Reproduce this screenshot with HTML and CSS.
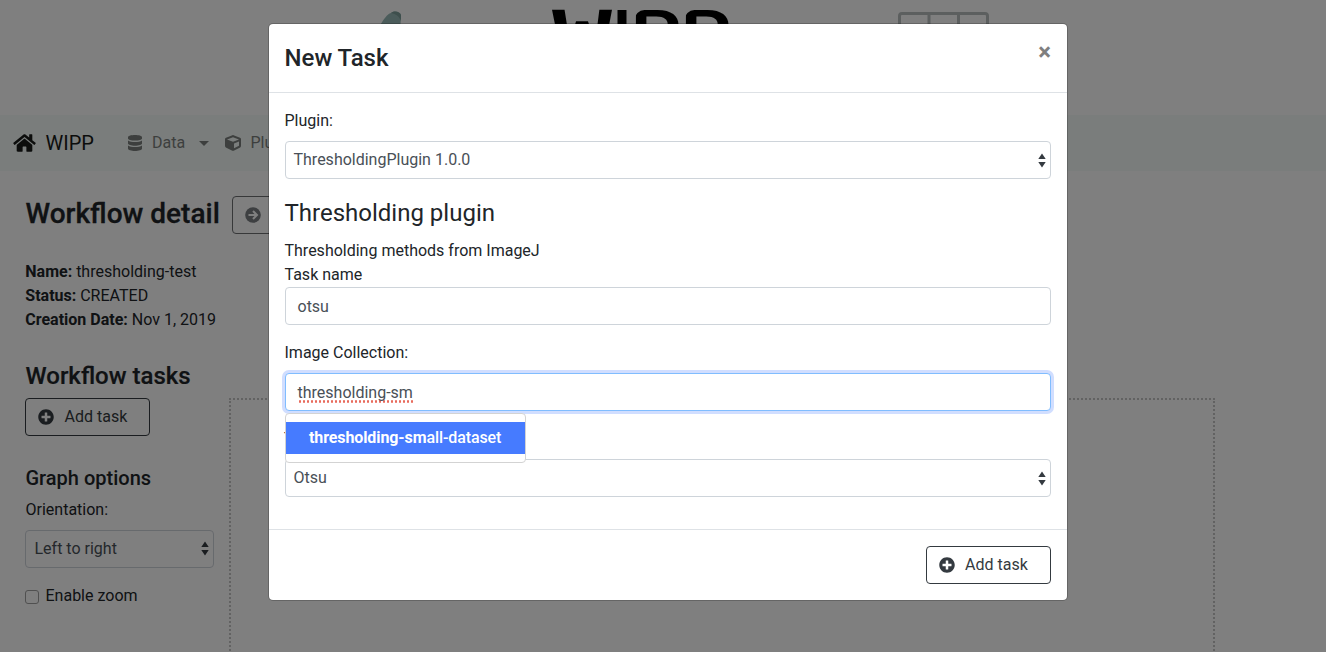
FILE: index.html
```html
<!DOCTYPE html>
<html lang="en">
<head>
<meta charset="utf-8">
<title>WIPP</title>
<link rel="stylesheet" href="styles.css">
</head>
<body>
<svg class="defs" width="0" height="0">
  <symbol id="plus" viewBox="0 0 512 512"><path fill="currentColor" d="M256 8C119 8 8 119 8 256s111 248 248 248 248-111 248-248S393 8 256 8zm144 276c0 6.600-5.400 12-12 12h-92v92c0 6.600-5.400 12-12 12h-56c-6.600 0-12-5.400-12-12v-92h-92c-6.600 0-12-5.400-12-12v-56c0-6.600 5.400-12 12-12h92v-92c0-6.600 5.400-12 12-12h56c6.600 0 12 5.400 12 12v92h92c6.600 0 12 5.400 12 12v56z"/></symbol>
  <symbol id="sort" viewBox="0 0 8 15"><path fill="#343a40" d="M.3 6 4 .5 7.700 6zM.3 9h7.400L4 14.500z"/></symbol>
</svg>
<div class="page">
  <header class="banner">
    <svg width="1326" height="115" viewBox="0 0 1326 115">
      <defs>
        <clipPath id="round1"><rect x="634.500" y="10" width="45.500" height="60" rx="10"/></clipPath>
        <clipPath id="round2"><rect x="684.500" y="10" width="45.500" height="60" rx="10"/></clipPath>
      </defs>
      <path d="M379 27C384 19 387 14 391 13C395 10 400 12 401 15L400 34H375z" fill="#97b9b6"/>
      <path d="M391 13C395 10 400 12 401 15L401 21C399 16 396 14 391 13z" fill="#7d9e9b"/>
      <g class="logo-text">
        <text class="logo-w" x="552" y="54" textLength="60" lengthAdjust="spacingAndGlyphs">W</text>
        <text x="613.500" y="54" textLength="17" lengthAdjust="spacingAndGlyphs">I</text>
        <g clip-path="url(#round1)"><text class="logo-p" x="630" y="54" textLength="52" lengthAdjust="spacingAndGlyphs">P</text></g>
        <g clip-path="url(#round2)"><text class="logo-p" x="680" y="54" textLength="52" lengthAdjust="spacingAndGlyphs">P</text></g>
      </g>
      <path d="M899.500 60V16q0-2.500 2.500-2.500h83q2.500 0 2.500 2.500v44M929 14v46M958.500 14v46" fill="none" stroke="#b8bfbf" stroke-width="3"/>
    </svg>
  </header>
  <nav class="nav">
    <svg class="home" width="23" height="20" viewBox="0 0 576 512"><path fill="currentColor" d="M488 312.700V456c0 13.300-10.700 24-24 24H348c-6.600 0-12-5.400-12-12V356c0-6.600-5.400-12-12-12h-72c-6.600 0-12 5.400-12 12v112c0 6.600-5.400 12-12 12H112c-13.300 0-24-10.700-24-24V312.700c0-3.600 1.600-7 4.400-9.300l188-154.800c4.400-3.600 10.800-3.600 15.300 0l188 154.800c2.700 2.300 4.300 5.700 4.300 9.300zm83.600-60.900L488 182.900V44.400c0-6.600-5.400-12-12-12h-56c-6.600 0-12 5.400-12 12V117l-89.500-73.700c-17.700-14.600-43.300-14.600-61 0L4.400 251.800c-5.100 4.200-5.800 11.800-1.600 16.900l25.500 31c4.200 5.100 11.800 5.800 16.900 1.600l235.200-193.700c4.400-3.600 10.800-3.600 15.300 0l235.200 193.700c5.100 4.200 12.700 3.500 16.900-1.600l25.500-31c4.200-5.200 3.400-12.700-1.700-16.900z"/></svg>
    <span class="brand">WIPP</span>
    <svg class="db" width="16" height="16" viewBox="0 0 16 16"><path fill="currentColor" d="M1 2.200C1 .9 4.100 0 8 0s7 .9 7 2.200v1.200C15 4.600 11.900 5.500 8 5.500S1 4.600 1 3.400zM1 5.400c1.500 1 4.200 1.500 7 1.500s5.500-.5 7-1.500v3.100c0 1.200-3.100 2.200-7 2.200s-7-1-7-2.200zM1 10.500C2.500 11.500 5.200 12 8 12s5.500-.5 7-1.500v3.300c0 1.200-3.100 2.200-7 2.200s-7-1-7-2.200z"/></svg>
    <span class="link data">Data</span>
    <svg class="caret" width="10" height="5" viewBox="0 0 10 5"><path fill="currentColor" d="M0 0h10L5 5z"/></svg>
    <svg class="cube" width="16" height="16" viewBox="0 0 512 512"><path fill="currentColor" d="M239.100 6.300l-208 78c-18.700 7-31.100 25-31.100 45v225.100c0 18.200 10.300 34.800 26.500 42.900l208 104c13.500 6.800 29.400 6.800 42.900 0l208-104c16.300-8.100 26.500-24.800 26.500-42.900V129.300c0-20-12.400-37.900-31.100-44.900l-208-78C262 2.200 250 2.200 239.100 6.300zM256 68.400l192 72v1.100l-192 78-192-78v-1.100l192-72zm32 356V275.500l160-65v133.900l-160 80z"/></svg>
    <span class="link">Plugins</span>
  </nav>
  <main class="main">
    <div class="title-row">
      <h2>Workflow detail</h2>
      <div class="btn submit"><svg width="16" height="16" viewBox="0 0 16 16"><circle cx="8" cy="8" r="7.800" fill="currentColor"/><path d="M3.500 8h8M8 4l4 4-4 4" fill="none" stroke="#fff" stroke-width="2"/></svg></div>
    </div>
    <div class="info">
      <div><b>Name:</b> thresholding-test</div>
      <div><b>Status:</b> CREATED</div>
      <div><b>Creation Date:</b> Nov 1, 2019</div>
    </div>
    <div class="columns">
      <aside class="side">
        <h4>Workflow tasks</h4>
        <div class="btn"><svg width="16" height="16"><use href="#plus"/></svg><span>Add task</span></div>
        <h5>Graph options</h5>
        <div class="side-label">Orientation:</div>
        <div class="select"><span>Left to right</span><svg width="8" height="15"><use href="#sort"/></svg></div>
        <div class="check"><i class="box"></i><span>Enable zoom</span></div>
      </aside>
      <div class="graph"></div>
    </div>
  </main>
</div>
<div class="backdrop">
  <section class="modal">
    <header class="modal-head"><h4>New Task</h4><span class="close">×</span></header>
    <div class="modal-body">
      <div class="label">Plugin:</div>
      <div class="select"><span>ThresholdingPlugin 1.0.0</span><svg width="8" height="15"><use href="#sort"/></svg></div>
      <h4 class="plugin-title">Thresholding plugin</h4>
      <div class="line">Thresholding methods from ImageJ</div>
      <div class="line">Task name</div>
      <div class="input task-name">otsu</div>
      <div class="label">Image Collection:</div>
      <div class="field">
        <div class="input focus"><span class="misspelt">thresholding-sm</span></div>
        <div class="menu"><div class="item"><b>thresholding-sm</b>all-dataset</div></div>
      </div>
      <div class="label type-label">T</div>
      <div class="select"><span>Otsu</span><svg width="8" height="15"><use href="#sort"/></svg></div>
    </div>
    <footer class="modal-foot"><div class="btn"><svg width="16" height="16"><use href="#plus"/></svg><span>Add task</span></div></footer>
  </section>
</div>
</body>
</html>
```
FILE: styles.css
```css
* { box-sizing: border-box; }
body { margin: 0; font: 400 16px/24px Roboto, sans-serif; color: #212529; background: #fff; height: 652px; overflow: hidden; }
svg { display: block; flex: none; }
.defs { position: absolute; }
h2, h4, h5 { margin: 0; font-weight: 500; line-height: 1.2; }
b { font-weight: 700; }
.page { height: 652px; overflow: hidden; }
.banner { height: 115px; }
.logo-text { font: 700 60px Inter, sans-serif; fill: #000; }
.logo-w { font: 700 60px "DejaVu Sans Mono", monospace; }
.logo-p { font-weight: 600; }
.nav { height: 56px; background: #f4fbf8; display: flex; align-items: center; padding-left: 13px; color: #7b7f7d; }
.home { color: #181a19; }
.brand { font-size: 20px; color: #181a19; margin-left: 9.5px; width: 81.5px; }
.data { margin-left: 9px; width: 47px; }
.cube { margin: 0 10px 0 15.5px; }
.main { padding: 25px 25px 0; }
.title-row { display: flex; align-items: center; height: 38px; }
h2 { font-size: 28px; width: 207px; white-space: nowrap; margin-top: -3px; text-indent: .5px; -webkit-text-stroke: .3px #212529; }
.btn { display: flex; align-items: center; width: 125px; height: 38px; border: 1px solid #343a40; border-radius: 4px; padding-left: 12.5px; gap: 9.5px; color: #343a40; line-height: 24px; }
.btn svg { margin-left: -.5px; margin-right: .5px; }
.submit { opacity: .65; border-color: #212529; }
.info { margin-top: 26px; text-indent: .3px; white-space: nowrap; }
.columns { display: flex; gap: 15px; }
.side { width: 189px; padding-top: 30px; text-indent: .5px; }
.side h4 { font-size: 24px; margin-bottom: 7px; -webkit-text-stroke: .2px #212529; }
.side h5 { font-size: 20px; margin: 30px 0 8px; }
.side-label { margin-bottom: 8px; }
.select, .input { display: flex; align-items: center; justify-content: space-between; height: 38px; border: 1px solid #ced4da; border-radius: 4px; background: #fff; color: #495057; padding: 0 4px 0 7.5px; }
.select span { margin-top: -1px; }
.side .select { padding-left: 8px; }
.side .select span { margin-top: 0; }
.input { padding: 0 11.5px; }
.check { display: flex; align-items: center; gap: 6px; margin-top: 16px; }
.box { width: 14px; height: 14px; border: 1px solid #a0a0a0; border-radius: 3px; margin-top: 3px; }
.graph { width: 986px; height: 400px; margin-top: 66px; border: 2px dotted #c4c4c4; }
.backdrop { position: absolute; inset: 0; background: rgba(0,0,0,.5); padding: 23px 0 0 268px; }
.modal { width: 800px; height: 578px; background: #fff; border: 1px solid rgba(0,0,0,.2); background-clip: padding-box; border-radius: 5px; }
.modal-head { display: flex; justify-content: space-between; height: 69px; padding: 20px 16px 0 15.5px; border-bottom: 1px solid #dee2e6; }
.modal-head h4, .plugin-title { font-size: 24px; }
.close { font-size: 24px; font-weight: 700; line-height: 24px; color: #7f7f7f; margin-top: -4px; }
.modal-body { padding: 16px 16px 0; height: 436px; }
.label, .line, .plugin-title { margin-left: -.5px; }
.label { margin-bottom: 8px; }
.modal-body .plugin-title { font-weight: 400; margin-top: 20px; margin-bottom: 11px; height: 29px; }
.task-name { margin-bottom: 16px; padding-top: 1px; }
.field { position: relative; margin-bottom: 16px; }
.focus { border-color: #80bdff; box-shadow: 0 0 0 3px #d1deff; }
.misspelt { background: radial-gradient(circle, #e86b5c 1px, transparent 1.500px) 0 100% / 4px 3px repeat-x; line-height: 21px; }
.menu { position: absolute; top: 40px; left: 0; width: 241px; height: 50px; padding: 8px 0; background: #fff; border: 1px solid #d3d3d3; border-radius: 4px; z-index: 1; }
.item { background: #467bff; color: #fff; height: 32px; line-height: 32px; padding-left: 23px; font-weight: 500; letter-spacing: -.1px; white-space: nowrap; }
.type-label { margin-left: -1px; }
.modal-foot { border-top: 1px solid #dee2e6; display: flex; justify-content: flex-end; padding: 16px; }
```
